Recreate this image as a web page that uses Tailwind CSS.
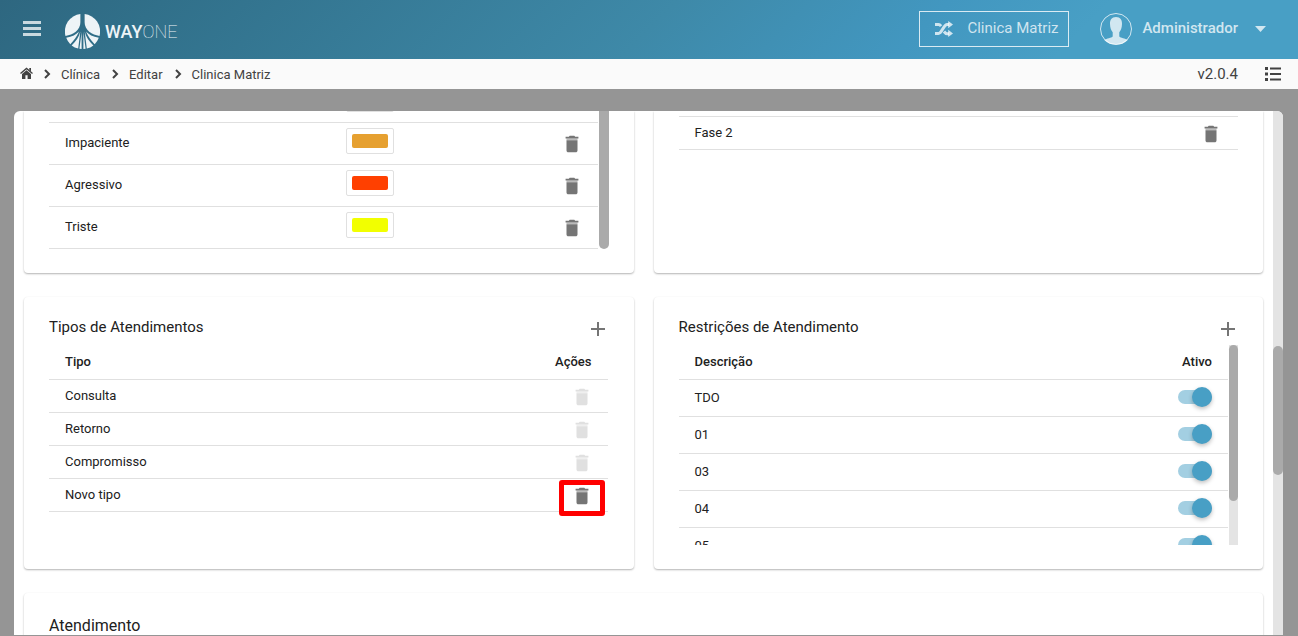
<!DOCTYPE html>
<html lang="pt-BR">
<head>
<meta charset="utf-8">
<meta name="viewport" content="width=device-width, initial-scale=1">
<title>WayOne - Clinica Matriz</title>
<script src="https://cdn.jsdelivr.net/npm/@tailwindcss/browser@4"></script>
</head>
<body class="flex h-screen flex-col overflow-hidden bg-[#959595] font-[Roboto,sans-serif] text-[13px] text-[#212121]">
<svg class="hidden" aria-hidden="true">
  <symbol id="trash" viewBox="0 0 24 24"><path fill="currentColor" d="M6 19c0 1.1.9 2 2 2h8c1.1 0 2-.9 2-2V8H6z"/><path fill="currentColor" opacity=".5" d="M6 6h12v2H6z"/><path fill="currentColor" d="M19 4h-3.500l-1-1h-5l-1 1H5v2h14z"/></symbol>
  <symbol id="plus" viewBox="0 0 14 14"><path stroke="currentColor" stroke-width="2" fill="none" d="M7 0v14M0 7h14"/></symbol>
  <symbol id="chev" viewBox="0 0 8 10"><path stroke="currentColor" stroke-width="2" fill="none" d="M2 1l4 4-4 4"/></symbol>
</svg>

<header class="flex h-[59px] shrink-0 items-center bg-linear-[135deg,#2e6780_0%,#31708a_12%,#3e89a8_50%,#4297c0_70%,#489fc5_82%] pr-8 pb-0.5 pl-[23px] text-white/75">
  <button type="button" aria-label="Menu" class="block"><svg class="h-4 w-[18px]" viewBox="0 0 18 16"><path fill="currentColor" d="M0 0h18v3H0zM0 6h18v3H0zM0 12h18v3H0z"/></svg></button>
  <a href="#" class="ml-6 flex items-center gap-[5px] pt-1.5 text-[#eef4f7]">
    <svg class="size-[35px]" viewBox="0 0 35 35">
      <g fill="currentColor">
        <path d="M15.400 0A17.500 17.500 0 0 0 .500 22C8 20.500 15.400 16.500 15.400 8z"/>
        <path d="M19.600 0A17.500 17.500 0 0 1 34.500 22C27 20.500 19.600 16.500 19.600 8z"/>
        <path d="M1.200 23.800C7 22.800 11.500 20.500 14 17.500 12 22.500 9 26.500 5.300 30.200A17.500 17.500 0 0 1 1.200 23.800z"/>
        <path d="M33.800 23.800C28 22.800 23.500 20.500 21 17.500 23 22.500 26 26.500 29.700 30.200A17.500 17.500 0 0 0 33.800 23.800z"/>
        <path d="M6.600 31.400C11 27.500 14 23 15.300 17.500L13.200 34.500A17.500 17.500 0 0 1 6.600 31.400z"/>
        <path d="M28.400 31.400C24 27.500 21 23 19.700 17.500L21.800 34.500A17.500 17.500 0 0 0 28.400 31.400z"/>
        <path d="M16.600 18v17l-2.200-.3zM18.400 18v17l2.200-.3z"/>
      </g>
    </svg>
    <span class="text-lg leading-5"><span class="font-medium">WAY</span><span class="font-thin">ONE</span></span>
  </a>
  <button type="button" class="ml-auto flex h-9 w-[150px] items-center gap-3.5 border border-white/80 pl-[15px] text-[15px]">
    <svg class="h-4 w-[18px]" viewBox="0 0 18 16"><path stroke="currentColor" stroke-width="3" fill="none" d="M0 3.500h3.500c1.200 0 1.800.6 2.600 1.600M9 10.500c1.300 1.800 2 2.200 3.200 2.200H14M0 12.500h3.500c3.500 0 5-9 8.700-9H14"/><path fill="currentColor" d="M13.200 0l4.800 3.600L13.200 7.300zM13.200 8.700l4.800 3.700-4.800 3.600z"/></svg>
    Clinica Matriz
  </button>
  <button type="button" class="ml-[31px] flex items-center text-[15px] font-medium">
    <svg class="mr-[10px] size-8" viewBox="0 0 32 32"><circle cx="16" cy="16" r="15.500" fill="none" stroke="currentColor"/><path fill="currentColor" d="M16 4c4.400 0 6.200 3 6 7-.1 4-1.200 6.500-2.700 8.200v4.300c1.200 1.600 6 1.800 8.500 3.500A15.500 15.500 0 0 1 16 31.500 15.500 15.500 0 0 1 4.200 27c2.500-1.700 7.300-1.900 8.500-3.500v-4.300C11.200 17.500 10.100 15 10 11c-.2-4 1.600-7 6-7z"/></svg>
    Administrador
    <svg class="ml-[17px] h-1.5 w-[11px]" viewBox="0 0 11 6"><path fill="currentColor" d="M0 0h11L5.500 6z"/></svg>
  </button>
</header>

<nav aria-label="Navegação" class="flex h-[30px] shrink-0 items-center bg-[#fafafa] pr-[17px] pl-5 text-[#424242]">
  <a href="#" aria-label="Início"><svg class="mb-0.5 h-3 w-[13px]" viewBox="0 0 13 12"><path fill="none" stroke="currentColor" stroke-width="1.400" d="M.5 6.500l6-5 6 5"/><path fill="currentColor" d="M9.300 1h1.700v3.500L9.300 3zM2 7l4.500-3.800L11 7v5H7.600V8.300H5.400V12H2z"/></svg></a>
  <svg class="mr-[10px] ml-[10px] h-2.5 w-2"><use href="#chev"/></svg>
  <a href="#" class="pt-0.5">Clínica</a>
  <svg class="mr-[10px] ml-[11px] h-2.5 w-2"><use href="#chev"/></svg>
  <a href="#" class="pt-0.5">Editar</a>
  <svg class="mr-[10px] ml-[11px] h-2.5 w-2"><use href="#chev"/></svg>
  <a href="#" class="pt-0.5">Clinica Matriz</a>
  <span class="ml-auto text-[15px]">v2.0.4</span>
  <button type="button" aria-label="Lista" class="ml-[27px]"><svg class="h-3.5 w-4" viewBox="0 0 16 14"><path fill="currentColor" d="M0 0h3v3H0zM0 5.500h3v3H0zM0 11h3v3H0zM5 .5h11v2H5zM5 6h11v2H5zM5 11.500h11v2H5z"/></svg></button>
</nav>

<main class="mt-[22px] mr-[15px] mb-px ml-[14px] flex min-h-0 flex-1 overflow-hidden rounded-t-md bg-white">
  <div class="flex min-w-0 flex-1 flex-col gap-6 overflow-hidden px-[10px]">
    <div class="grid shrink-0 grid-cols-2 gap-5">
      <section aria-label="Humor" class="h-[162px] rounded-b bg-white pr-[25px] pl-[25px] shadow-[0_1px_2px_rgba(0,0,0,0.3)]">
        <div class="flex h-[138px] gap-px">
          <div class="flex flex-1 flex-col justify-end overflow-hidden">
            <table class="w-full shrink-0 border-collapse">
              <tbody>
                <tr class="h-[42px] border-b border-[#e0e0e0]"><td></td><td class="pt-[5px] align-top"><input type="color" value="#48c557" aria-label="Cor" class="block h-[26px] w-12 appearance-none rounded-xs border border-[#e0e0e0] p-[5px]"></td><td></td></tr>
                <tr class="h-[42px] border-b border-[#e0e0e0]"><td class="pb-0.5 pl-4">Impaciente</td><td class="w-12 pt-[5px] align-top"><input type="color" value="#e6a030" aria-label="Cor de Impaciente" class="block h-[26px] w-12 appearance-none rounded-xs border border-[#e0e0e0] bg-white p-[5px] [&::-webkit-color-swatch]:rounded-xs [&::-webkit-color-swatch]:border-0 [&::-webkit-color-swatch-wrapper]:p-0"></td><td class="w-[204px] pr-[15px]"><button type="button" aria-label="Excluir Impaciente" class="ml-auto block text-[#757575]"><svg class="size-[22px]"><use href="#trash"/></svg></button></td></tr>
                <tr class="h-[42px] border-b border-[#e0e0e0]"><td class="pb-0.5 pl-4">Agressivo</td><td class="pt-[5px] align-top"><input type="color" value="#ff4000" aria-label="Cor de Agressivo" class="block h-[26px] w-12 appearance-none rounded-xs border border-[#e0e0e0] bg-white p-[5px] [&::-webkit-color-swatch]:rounded-xs [&::-webkit-color-swatch]:border-0 [&::-webkit-color-swatch-wrapper]:p-0"></td><td class="pr-[15px]"><button type="button" aria-label="Excluir Agressivo" class="ml-auto block text-[#757575]"><svg class="size-[22px]"><use href="#trash"/></svg></button></td></tr>
                <tr class="h-[42px] border-b border-[#e0e0e0]"><td class="pb-0.5 pl-4">Triste</td><td class="pt-[5px] align-top"><input type="color" value="#f2ff00" aria-label="Cor de Triste" class="block h-[26px] w-12 appearance-none rounded-xs border border-[#e0e0e0] bg-white p-[5px] [&::-webkit-color-swatch]:rounded-xs [&::-webkit-color-swatch]:border-0 [&::-webkit-color-swatch-wrapper]:p-0"></td><td class="pr-[15px]"><button type="button" aria-label="Excluir Triste" class="ml-auto block text-[#757575]"><svg class="size-[22px]"><use href="#trash"/></svg></button></td></tr>
              </tbody>
            </table>
          </div>
          <div class="w-[10px] rounded-b-full bg-[#aaaaaa]"></div>
        </div>
      </section>
      <section aria-label="Fases" class="rounded-b bg-white px-[25px] pt-[5px] shadow-[0_1px_2px_rgba(0,0,0,0.3)]">
        <table class="w-full border-collapse">
          <tbody><tr class="h-[33px] border-y border-[#e0e0e0]"><td class="pl-4">Fase 2</td><td class="pt-px pr-4"><button type="button" aria-label="Excluir Fase 2" class="ml-auto block text-[#757575]"><svg class="size-[22px]"><use href="#trash"/></svg></button></td></tr></tbody>
        </table>
      </section>
    </div>

    <div class="grid shrink-0 grid-cols-2 gap-5">
      <section class="h-[272px] rounded bg-white pt-5 pr-[26px] pl-[25px] shadow-[0_1px_2px_rgba(0,0,0,0.3)]">
        <div class="flex h-7 items-start justify-between pr-[3px]">
          <h2 class="text-[15px] leading-5">Tipos de Atendimentos</h2>
          <button type="button" aria-label="Adicionar tipo" class="mt-[5px] text-[#757575]"><svg class="size-3.5"><use href="#plus"/></svg></button>
        </div>
        <table class="w-full border-collapse">
          <thead><tr class="h-[34px] border-b border-[#e0e0e0]"><th class="pb-px pl-4 text-left font-medium">Tipo</th><th class="pr-4 pb-px text-right font-medium">Ações</th></tr></thead>
          <tbody>
            <tr class="h-[33px] border-b border-[#e0e0e0]"><td class="pt-px pl-4">Consulta</td><td class="pt-0.5 pr-[15px]"><button type="button" disabled aria-label="Excluir Consulta" class="ml-auto block text-[#e0e0e0]"><svg class="size-[22px]"><use href="#trash"/></svg></button></td></tr>
            <tr class="h-[33px] border-b border-[#e0e0e0]"><td class="pt-px pl-4">Retorno</td><td class="pt-0.5 pr-[15px]"><button type="button" disabled aria-label="Excluir Retorno" class="ml-auto block text-[#e0e0e0]"><svg class="size-[22px]"><use href="#trash"/></svg></button></td></tr>
            <tr class="h-[33px] border-b border-[#e0e0e0]"><td class="pt-px pl-4">Compromisso</td><td class="pt-0.5 pr-[15px]"><button type="button" disabled aria-label="Excluir Compromisso" class="ml-auto block text-[#e0e0e0]"><svg class="size-[22px]"><use href="#trash"/></svg></button></td></tr>
            <tr class="h-[33px] border-b border-[#e0e0e0]"><td class="pt-px pl-4">Novo tipo</td><td class="pt-0.5 pr-[15px]"><button type="button" aria-label="Excluir Novo tipo" class="relative ml-auto block text-[#757575]"><svg class="size-[22px]"><use href="#trash"/></svg><span class="absolute -top-[5px] -left-3 h-9 w-[46px] rounded-[3px] border-5 border-[#ff0000]"></span></button></td></tr>
          </tbody>
        </table>
      </section>

      <section class="rounded bg-white px-[25px] pt-5 shadow-[0_1px_2px_rgba(0,0,0,0.3)]">
        <div class="flex h-7 items-start justify-between pr-[3px]">
          <h2 class="text-[15px] leading-5">Restrições de Atendimento</h2>
          <button type="button" aria-label="Adicionar restrição" class="mt-[5px] text-[#757575]"><svg class="size-3.5"><use href="#plus"/></svg></button>
        </div>
        <div class="flex h-[200px] gap-px">
          <div class="flex-1 overflow-hidden">
            <table class="w-full border-collapse">
              <thead><tr class="h-[34px] border-b border-[#e0e0e0]"><th class="pb-px pl-4 text-left font-medium">Descrição</th><th class="pr-4 pb-px text-right font-medium">Ativo</th></tr></thead>
              <tbody>
                <tr class="h-[37px] border-b border-[#e0e0e0]"><td class="pl-4"><label for="r1">TDO</label></td><td class="pr-4 pb-0.5"><input id="r1" type="checkbox" checked class="ml-auto block h-3.5 w-[34px] appearance-none rounded-full bg-[#a3cfe2] before:-mt-[3px] before:ml-3.5 before:block before:size-5 before:rounded-full before:bg-[#489fc5] before:shadow-[0_2px_4px_rgba(0,0,0,0.25)]"></td></tr>
                <tr class="h-[37px] border-b border-[#e0e0e0]"><td class="pl-4"><label for="r2">01</label></td><td class="pr-4 pb-0.5"><input id="r2" type="checkbox" checked class="ml-auto block h-3.5 w-[34px] appearance-none rounded-full bg-[#a3cfe2] before:-mt-[3px] before:ml-3.5 before:block before:size-5 before:rounded-full before:bg-[#489fc5] before:shadow-[0_2px_4px_rgba(0,0,0,0.25)]"></td></tr>
                <tr class="h-[37px] border-b border-[#e0e0e0]"><td class="pl-4"><label for="r3">03</label></td><td class="pr-4 pb-0.5"><input id="r3" type="checkbox" checked class="ml-auto block h-3.5 w-[34px] appearance-none rounded-full bg-[#a3cfe2] before:-mt-[3px] before:ml-3.5 before:block before:size-5 before:rounded-full before:bg-[#489fc5] before:shadow-[0_2px_4px_rgba(0,0,0,0.25)]"></td></tr>
                <tr class="h-[37px] border-b border-[#e0e0e0]"><td class="pl-4"><label for="r4">04</label></td><td class="pr-4 pb-0.5"><input id="r4" type="checkbox" checked class="ml-auto block h-3.5 w-[34px] appearance-none rounded-full bg-[#a3cfe2] before:-mt-[3px] before:ml-3.5 before:block before:size-5 before:rounded-full before:bg-[#489fc5] before:shadow-[0_2px_4px_rgba(0,0,0,0.25)]"></td></tr>
                <tr class="h-[37px] border-b border-[#e0e0e0]"><td class="pl-4"><label for="r5">05</label></td><td class="pr-4 pb-0.5"><input id="r5" type="checkbox" checked class="ml-auto block h-3.5 w-[34px] appearance-none rounded-full bg-[#a3cfe2] before:-mt-[3px] before:ml-3.5 before:block before:size-5 before:rounded-full before:bg-[#489fc5] before:shadow-[0_2px_4px_rgba(0,0,0,0.25)]"></td></tr>
              </tbody>
            </table>
          </div>
          <div class="w-[9px] bg-[#e4e4e4]"><div class="h-[156px] rounded-full bg-[#aaaaaa]"></div></div>
        </div>
      </section>
    </div>

    <section class="h-[200px] shrink-0 rounded bg-white px-[25px] pt-[23px] shadow-[0_1px_2px_rgba(0,0,0,0.3)]">
      <h2 class="text-base leading-5">Atendimento</h2>
    </section>
  </div>
  <div class="w-[10px] bg-[#e4e4e4] pt-[235px]"><div class="h-[129px] rounded-full bg-[#aaaaaa]"></div></div>
</main>
</body>
</html>
